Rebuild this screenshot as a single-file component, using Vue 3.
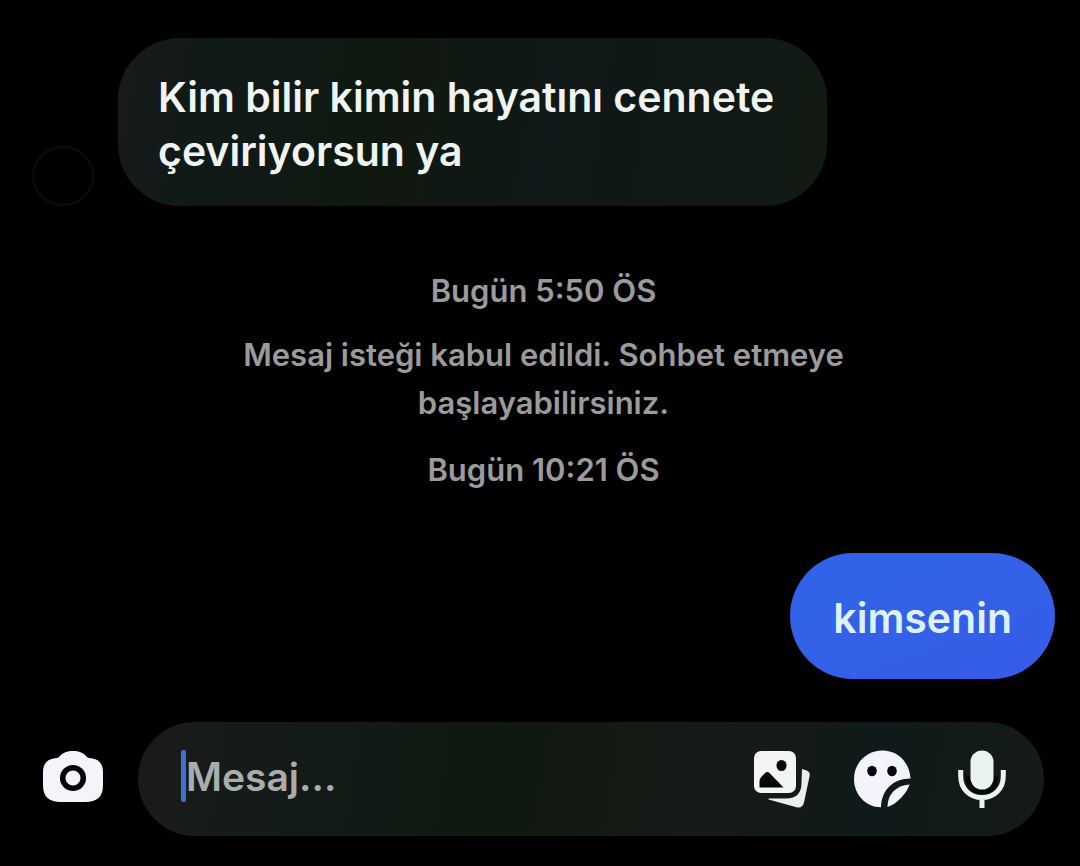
<script setup>
import { ref } from 'vue'

const draft = ref('')
const incoming = 'Kim bilir kimin hayatını cennete çeviriyorsun ya'
const outgoing = 'kimsenin'
</script>

<template>
  <main class="chat">
    <section class="thread" aria-label="Sohbet">
      <div class="row">
        <span class="avatar" aria-hidden="true"></span>
        <p class="bubble bubble-in">{{ incoming }}</p>
      </div>

      <div class="notices">
        <time class="notice">Bugün 5:50 ÖS</time>
        <p class="notice">Mesaj isteği kabul edildi. Sohbet etmeye başlayabilirsiniz.</p>
        <time class="notice last">Bugün 10:21 ÖS</time>
      </div>

      <div class="row row-out">
        <p class="bubble bubble-out">{{ outgoing }}</p>
      </div>
    </section>

    <form class="composer" @submit.prevent>
      <button type="button" class="icon-button" aria-label="Kamera">
        <svg width="60" height="52" viewBox="0 0 60 52">
          <path fill="#f7f3fa" d="M30 0C36 0 40 1.500 43 5C44.500 6.700 45.500 7 48 7.300C56 8.200 60 13 60 21V34C60 46 54 51 42 51H18C6 51 0 46 0 34V21C0 13 4 8.200 12 7.300C14.500 7 15.500 6.700 17 5C20 1.500 24 0 30 0Z" />
          <circle cx="30" cy="27" r="10.300" fill="none" stroke="#050505" stroke-width="5.500" />
        </svg>
      </button>

      <div class="field">
        <span class="caret" aria-hidden="true"></span>
        <input v-model="draft" type="text" class="input" placeholder="Mesaj..." aria-label="Mesaj" />
        <button type="button" class="icon-button" aria-label="Galeri">
          <svg width="58" height="58" viewBox="0 0 58 58">
            <path fill="#eceeec" d="M49 19L53 20.200Q57.500 21.500 56.600 26L51 52.500Q49.500 58.500 43.500 57.300L15.500 49.500V48.500H33Q48.500 48.500 48.500 33Z" />
            <rect x="1" y="1" width="42" height="42" rx="7" fill="#f3f5f3" />
            <ellipse cx="28.500" cy="15.500" rx="5" ry="5.500" fill="#050706" />
            <path fill="#050706" d="M6.500 37.500V31Q6.500 28.500 8.300 27L12 23Q14.300 21 16.500 23L30.500 37.500Z" />
          </svg>
        </button>
        <button type="button" class="icon-button" aria-label="Çıkartma">
          <svg width="58" height="58" viewBox="0 0 58 58">
            <path fill="#f3f4fb" d="M28 57.300C12.500 57 1 44.500 1 29C1 13 13.500 0.500 29.500 0.500C44.500 0.500 56.500 12 57.500 28.500C40 28.500 28.500 40 28 57.300Z" />
            <path fill="#f3f4fb" d="M34.500 57C34.500 44 43 35.500 56.500 34.500C54 43 44 54 34.500 57Z" />
            <ellipse cx="19" cy="21" rx="4.800" ry="5.300" fill="#07090a" />
            <ellipse cx="39" cy="21" rx="4.800" ry="5.300" fill="#07090a" />
          </svg>
        </button>
        <button type="button" class="icon-button" aria-label="Sesli mesaj">
          <svg width="48" height="58" viewBox="0 0 48 58">
            <path fill="none" stroke="#050807" stroke-width="5" d="M10 26V28A14 14 0 0 0 38 28V26" />
            <rect x="12.500" y="0.500" width="23" height="39" rx="11.500" fill="#eaf3f1" />
            <path fill="none" stroke="#eaf3f1" stroke-width="5" d="M2.700 20V26C2.700 38.500 11.500 47.500 24 47.500S45.300 38.500 45.300 26V20M24 47.500V58" />
          </svg>
        </button>
      </div>
    </form>
  </main>
</template>

<style>
html,
body {
  background: #000;
}
</style>

<style scoped>
.chat {
  box-sizing: border-box;
  min-height: 100vh;
  display: flex;
  flex-direction: column;
  padding: 38px 0 30px;
  background: #000;
  color: #eff4f2;
  font-family: Inter, "Noto Sans", sans-serif;
}

.thread {
  flex: 1;
  display: flex;
  flex-direction: column;
}

.row {
  display: flex;
  align-items: flex-end;
  gap: 24px;
  padding: 0 20px 0 32px;
}

.row-out {
  justify-content: flex-end;
  padding-right: 25px;
}

.avatar {
  box-sizing: border-box;
  flex: none;
  width: 62px;
  height: 60px;
  border: 2px solid #0b0c0b;
  border-radius: 50%;
}

.bubble {
  box-sizing: border-box;
  margin: 0;
  font-size: 41px;
  line-height: 54px;
  font-weight: 600;
}

.bubble-in {
  max-width: 69%;
  padding: 32px 40px 28px;
  border-radius: 62px;
  background: linear-gradient(100deg, #181b1a 0%, #101a18 14%, #10190f 38%, #101819 60%, #111a12 100%);
}

.bubble-out {
  padding: 38px 43px 34px;
  border-radius: 63px;
  background: linear-gradient(160deg, #3163e8 30%, #385be7 100%);
  color: #def1ff;
}

.notices {
  display: flex;
  flex-direction: column;
  align-items: center;
  gap: 16px;
  padding: 61px 200px 59px 207px;
  color: #9b9b9b;
  text-align: center;
}

.notice {
  margin: 0;
  font-size: 31px;
  line-height: 48px;
  font-weight: 600;
}

.last {
  padding-top: 3px;
}

.composer {
  display: flex;
  align-items: center;
  gap: 35px;
  padding: 0 36px 0 43px;
}

.icon-button {
  flex: none;
  display: flex;
  justify-content: center;
  width: 60px;
  margin: 0;
  padding: 0;
  border: 0;
  background: none;
}

.composer > .icon-button {
  padding-bottom: 4px;
}

.icon-button svg {
  display: block;
}

.field {
  box-sizing: border-box;
  flex: 1;
  min-width: 0;
  height: 114px;
  display: flex;
  align-items: center;
  gap: 40px;
  padding: 0 32px 0 43px;
  border-radius: 57px;
  background: linear-gradient(100deg, #1a1b1a 0%, #131b19 18%, #0f190f 40%, #171a17 62%, #101a1a 80%, #141b19 100%);
}

.caret {
  flex: none;
  width: 5px;
  height: 52px;
  margin: 0 -40px 6px 0;
  border-radius: 2px;
  background: #3f70cf;
}

.input {
  flex: 1;
  min-width: 0;
  margin: 0;
  padding: 0 0 4px;
  border: 0;
  outline: 0;
  background: none;
  color: #eff4f2;
  caret-color: #3f70cf;
  font: 600 39px/54px Inter, "Noto Sans", sans-serif;
}

.input::placeholder {
  color: #a9adab;
  opacity: 1;
}
</style>
